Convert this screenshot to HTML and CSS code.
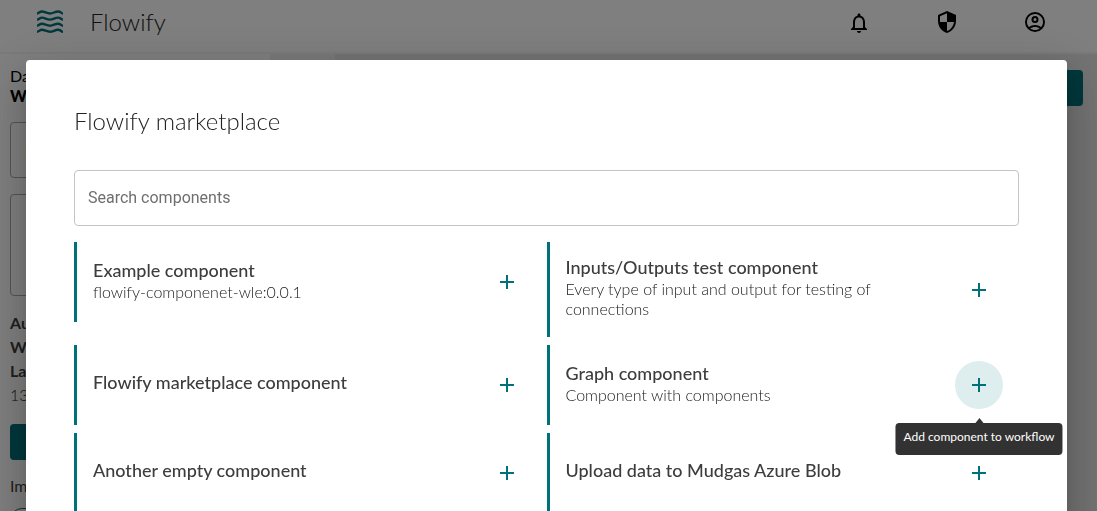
FILE: index.html
```
<!DOCTYPE html>
<html lang="en">
<head>
<meta charset="utf-8">
<meta name="viewport" content="width=device-width, initial-scale=1">
<title>Flowify</title>
<link rel="stylesheet" href="styles.css">
</head>
<body>
<div class="page">
  <header class="topbar">
    <a class="brand" href="#">
      <svg class="brand-logo" viewBox="0 0 28 24" aria-hidden="true">
        <path d="M1 4.500C3 4.500 3.500 2.500 6 2.500S11 4.500 14 4.500S19 2.500 22 2.500S25 4.500 27 4.500M1 10.600C3 10.600 3.500 8.600 6 8.600S11 10.600 14 10.600S19 8.600 22 8.600S25 10.600 27 10.600M1 16.700C3 16.700 3.500 14.700 6 14.700S11 16.700 14 16.700S19 14.700 22 14.700S25 16.700 27 16.700M1 22.800C3 22.800 3.500 20.800 6 20.800S11 22.800 14 22.800S19 20.800 22 20.800S25 22.800 27 22.800"/>
      </svg>
      <span>Flowify</span>
    </a>
    <nav class="actions">
      <button class="action" aria-label="Notifications"><svg viewBox="0 -2 24 24"><path d="M12 22c1.100 0 2-.9 2-2h-4c0 1.100.9 2 2 2zm6-6v-5c0-3.070-1.630-5.640-4.500-6.320V4c0-.83-.67-1.500-1.500-1.500s-1.500.67-1.500 1.500v.68C7.640 5.360 6 7.920 6 11v5l-2 2v1h16v-1l-2-2zm-2 1H8v-6c0-2.480 1.510-4.500 4-4.500s4 2.020 4 4.500v6z"/></svg></button>
      <button class="action" aria-label="Administration"><svg viewBox="0 -1 24 24"><path d="M12 1L3 5v6c0 5.550 3.840 10.740 9 12 5.160-1.260 9-6.450 9-12V5l-9-4zm0 10.990h7c-.53 4.120-3.280 7.790-7 8.940V12H5V6.300l7-3.110v8.800z"/></svg></button>
      <button class="action" aria-label="Account"><svg viewBox="0 -1 24 24"><path fill-rule="evenodd" d="M12 2a10 10 0 1 0 0 20 10 10 0 0 0 0-20zM7.350 18.500C8.660 17.560 10.260 17 12 17s3.340.56 4.650 1.500C15.340 19.440 13.740 20 12 20s-3.340-.56-4.650-1.500zm10.790-1.380a9.950 9.950 0 0 0-12.280 0A8 8 0 1 1 20 12c0 1.950-.7 3.730-1.860 5.120zM12 6a3.500 3.500 0 1 0 0 7 3.500 3.500 0 0 0 0-7zm0 5a1.500 1.500 0 1 1 0-3 1.500 1.500 0 0 1 0 3z"/></svg></button>
    </nav>
  </header>
  <div class="workspace">
    <aside class="sidebar">
      <div class="crumbs"><a href="#">Da</a><strong>Wa</strong></div>
      <input class="field" value="N" aria-label="Name">
      <textarea class="field field-tall" aria-label="Description"></textarea>
      <div class="meta"><strong>Au</strong><strong>Wo</strong><strong>La</strong><span>13</span></div>
      <button class="primary" aria-label="Save"></button>
      <h2 class="section">Im</h2>
      <button class="chip" aria-label="Import"></button>
    </aside>
    <main class="canvas">
      <div class="tab"></div>
      <button class="primary run" aria-label="Run"></button>
    </main>
  </div>
</div>

<div class="backdrop">
  <section class="dialog" role="dialog" aria-modal="true" aria-labelledby="dialog-title">
    <h1 id="dialog-title">Flowify marketplace</h1>
    <input class="search" type="text" placeholder="Search components" aria-label="Search components">
    <ul class="components">
      <li class="component">
        <div class="info"><h3>Example component</h3><p>flowify-componenet-wle:0.0.1</p></div>
        <button class="add" aria-label="Add component"><svg viewBox="0 0 24 24"><path d="M19 13h-6v6h-2v-6H5v-2h6V5h2v6h6z"/></svg></button>
      </li>
      <li class="component">
        <div class="info"><h3>Inputs/Outputs test component</h3><p>Every type of input and output for testing of connections</p></div>
        <button class="add" aria-label="Add component"><svg viewBox="0 0 24 24"><path d="M19 13h-6v6h-2v-6H5v-2h6V5h2v6h6z"/></svg></button>
      </li>
      <li class="component">
        <div class="info"><h3>Flowify marketplace component</h3></div>
        <button class="add" aria-label="Add component"><svg viewBox="0 0 24 24"><path d="M19 13h-6v6h-2v-6H5v-2h6V5h2v6h6z"/></svg></button>
      </li>
      <li class="component">
        <div class="info"><h3>Graph component</h3><p>Component with components</p></div>
        <div class="add-wrap">
          <button class="add add-hover" aria-label="Add component" aria-describedby="add-tip"><svg viewBox="0 0 24 24"><path d="M19 13h-6v6h-2v-6H5v-2h6V5h2v6h6z"/></svg></button>
          <div class="tooltip" id="add-tip" role="tooltip">Add component to workflow</div>
        </div>
      </li>
      <li class="component">
        <div class="info"><h3>Another empty component</h3></div>
        <button class="add" aria-label="Add component"><svg viewBox="0 0 24 24"><path d="M19 13h-6v6h-2v-6H5v-2h6V5h2v6h6z"/></svg></button>
      </li>
      <li class="component">
        <div class="info"><h3>Upload data to Mudgas Azure Blob</h3></div>
        <button class="add" aria-label="Add component"><svg viewBox="0 0 24 24"><path d="M19 13h-6v6h-2v-6H5v-2h6V5h2v6h6z"/></svg></button>
      </li>
    </ul>
  </section>
</div>
</body>
</html>
```
FILE: styles.css
```
* { box-sizing: border-box; }
body { margin: 0; overflow: hidden; color: #3d3d3d; font-family: Lato, "Open Sans", sans-serif; font-size: 16px; }
h1, h2, h3, p, ul { margin: 0; padding: 0; }
button { border: 0; padding: 0; font: inherit; cursor: pointer; }

.page { display: flex; flex-direction: column; height: 100vh; overflow: hidden; background: #fff; }
.topbar { display: flex; align-items: center; justify-content: space-between; flex: none; height: 54px; padding: 0 50px 10px 36px; border-bottom: 2px solid #f4f4f4; }
.brand { display: flex; align-items: center; gap: 26px; color: #222; font-size: 24px; font-weight: 300; text-decoration: none; }
.brand-logo { width: 28px; height: 24px; fill: none; stroke: #007079; stroke-width: 2.4; }
.actions { display: flex; gap: 64px; }
.action { width: 24px; height: 24px; background: none; }
.action svg { display: block; width: 24px; height: 24px; }

.workspace { display: flex; flex: 1; min-height: 0; }
.sidebar { display: flex; flex-direction: column; flex: none; width: 270px; padding: 12px 10px; overflow: hidden; }
.crumbs, .meta { display: flex; flex-direction: column; }
.crumbs { line-height: 20px; color: #000; }
.crumbs a { color: inherit; font-weight: 400; text-decoration: none; }
.crumbs strong { font-weight: 900; }
.field { flex: none; width: 100%; height: 56px; margin-top: 16px; padding: 0 14px; border: 1px solid #a8a8a8; border-radius: 4px; background: transparent; font: 16px Roboto, sans-serif; }
.field-tall { height: 102px; resize: none; }
.meta { margin: 15px 0 17px; line-height: 24px; }
.meta span { color: #222; font-weight: 300; }
.primary { flex: none; height: 36px; border-radius: 4px; background: #007079; }
.section { margin: 16px 0 12px; font-size: 16px; font-weight: 400; line-height: 20px; }
.chip { flex: none; width: 120px; height: 24px; border: 1px solid #007079; border-radius: 12px; background: none; }
.canvas { display: flex; justify-content: space-between; align-items: flex-start; flex: 1; padding-right: 14px; background: #e6e6e6; }
.tab { width: 65px; height: 36px; background: #f2f2f2; }
.run { width: 90px; margin-top: 16px; }

.backdrop { position: fixed; inset: 0; padding: 60px 30px 0 26px; overflow: hidden; background: rgba(0, 0, 0, .5); }
.dialog { padding: 47px 48px 64px; border-radius: 4px; background: #fff; box-shadow: 0 11px 15px -7px rgba(0, 0, 0, .2), 0 24px 38px 3px rgba(0, 0, 0, .14), 0 9px 46px 8px rgba(0, 0, 0, .12); }
.dialog h1 { color: #222; font-size: 24px; font-weight: 300; line-height: 28px; }
.search { display: block; width: 100%; height: 56px; margin: 35px 0 16px; padding: 0 13px 2px; border: 1px solid #c4c4c4; border-radius: 4px; font: 16px Roboto, sans-serif; }
.search::placeholder { color: #6f6f6f; opacity: 1; }
.components { display: grid; grid-template-columns: 1fr 1fr; align-items: start; row-gap: 8px; list-style: none; }
.component { display: flex; align-items: center; justify-content: space-between; min-height: 80px; padding: 15px 16px; border-left: 3px solid #007079; }
.info { max-width: 320px; padding-bottom: 3px; }
.info h3 { font-size: 18px; font-weight: 500; line-height: 20px; }
.info h3:only-child { padding-bottom: 3px; }
.info p { padding-top: 2px; color: #1a1a1a; font-size: 16px; font-weight: 300; line-height: 20px; }
.add-wrap { position: relative; }
.add { display: grid; place-items: center; flex: none; width: 48px; height: 48px; border-radius: 50%; background: none; }
.add svg { width: 24px; height: 24px; fill: #007079; }
.add-hover { background: #deeded; }
.tooltip { position: absolute; top: 62px; left: 50%; transform: translateX(-50%); padding: 6px 8px 10px; border-radius: 4px; background: #323232; color: #fff; font-size: 12px; font-weight: 400; line-height: 16px; white-space: nowrap; }
.tooltip::before { content: ""; position: absolute; bottom: 100%; left: 50%; margin-left: -4px; border: 4px solid transparent; border-top: 0; border-bottom: 5px solid #323232; }
```
